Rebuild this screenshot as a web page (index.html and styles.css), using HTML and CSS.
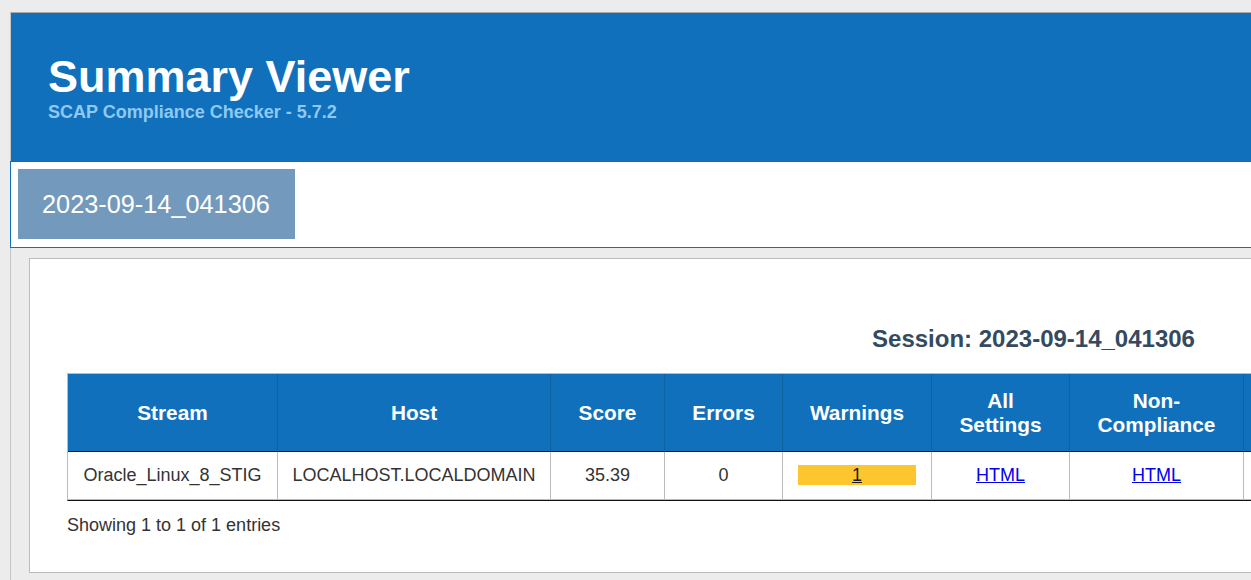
FILE: index.html
```html
<!DOCTYPE html>
<html lang="en">
<head>
<meta charset="utf-8">
<title>Summary Viewer</title>
<link rel="stylesheet" href="styles.css">
</head>
<body>
<div class="page">
  <header class="banner">
    <h1 class="title">Summary Viewer</h1>
    <div class="subtitle">SCAP Compliance Checker - 5.7.2</div>
  </header>
  <nav class="tabs">
    <div class="tab">2023-09-14_041306</div>
  </nav>
  <main class="content">
    <section class="card">
      <h2 class="session">Session: 2023-09-14_041306</h2>
      <table class="results">
        <thead>
          <tr>
            <th class="c-stream">Stream</th>
            <th class="c-host">Host</th>
            <th class="c-score">Score</th>
            <th class="c-errors">Errors</th>
            <th class="c-warn">Warnings</th>
            <th class="c-all">All Settings</th>
            <th class="c-non">Non-Compliance</th>
            <th class="c-extra">XCCDF Results</th>
            <th class="c-extra">ARF Results</th>
            <th class="c-extra">OVAL Results</th>
            <th class="c-extra">Log</th>
          </tr>
        </thead>
        <tbody>
          <tr>
            <td>Oracle_Linux_8_STIG</td>
            <td>LOCALHOST.LOCALDOMAIN</td>
            <td>35.39</td>
            <td>0</td>
            <td><span class="warn"><a class="warn-link" href="#">1</a></span></td>
            <td><a href="#">HTML</a></td>
            <td><a href="#">HTML</a></td>
            <td><a href="#">XML</a></td>
            <td><a href="#">XML</a></td>
            <td><a href="#">XML</a></td>
            <td><a href="#">TXT</a></td>
          </tr>
        </tbody>
      </table>
      <div class="info">Showing 1 to 1 of 1 entries</div>
    </section>
  </main>
</div>
</body>
</html>
```

FILE: styles.css
```css
html, body {
  margin: 0;
  padding: 0;
  background: #ececec;
  overflow: hidden;
  font-family: "Liberation Sans", Arial, sans-serif;
}

.page {
  width: max-content;
  margin: 12px 0 0 10px;
  border-top: 1px solid #aaaaaa;
  border-left: 1px solid #c6c6c6;
  min-height: 700px;
}

.banner {
  background: #1170bb;
  padding: 41px 37px 40px;
}

.title {
  margin: 0;
  color: #ffffff;
  font-size: 45px;
  line-height: 45px;
  font-weight: bold;
}

.subtitle {
  margin-top: 4px;
  color: #8ec9f5;
  font-size: 18px;
  line-height: 18px;
  font-weight: bold;
}

.tabs {
  margin-left: -1px;
  background: #ffffff;
  border: 1px solid #1170bb;
  padding: 7px 7px 8px;
}

.tab {
  display: inline-block;
  vertical-align: top;
  background: #739abd;
  color: #ffffff;
  font-size: 25.3px;
  height: 70px;
  line-height: 70px;
  padding: 0 24px;
  width: 229px;
  text-align: left;
  white-space: nowrap;
}

.content {
  padding: 10px 18px 0;
}

.card {
  width: max-content;
  background: #ffffff;
  border: 1px solid #bbbbbb;
  padding: 66px 37px 36px;
}

.session {
  margin: 0 0 20px;
  text-align: center;
  color: #344a5f;
  font-size: 24px;
  line-height: 28px;
  font-weight: bold;
}

.results {
  width: 1933px;
  table-layout: fixed;
  border-collapse: separate;
  border-spacing: 0;
  border-top: 1px solid #bbbbbb;
  border-left: 1px solid #bbbbbb;
  border-bottom: 1px solid #111111;
}

.results th,
.results td {
  box-sizing: border-box;
  text-align: center;
}

.results th {
  background: #1170bb;
  color: #ffffff;
  font-size: 20.8px;
  line-height: 24px;
  font-weight: bold;
  padding: 15px 18px 14px;
  height: 78px;
  border-right: 1px solid #0f63a0;
  border-bottom: 1px solid #111111;
  vertical-align: middle;
}

.results td {
  color: #333333;
  font-size: 18px;
  line-height: 20px;
  padding: 13px 14px 14px;
  border-right: 1px solid #bbbbbb;
  border-bottom: 1px solid #bbbbbb;
  vertical-align: middle;
}

.c-stream { width: 210px; }
.c-host { width: 273px; }
.c-score { width: 114px; }
.c-errors { width: 118px; }
.c-warn { width: 149px; }
.c-all { width: 138px; }
.c-non { width: 174px; }
.c-extra { width: 189px; }

.results td:nth-child(5) {
  padding-left: 15px;
  padding-right: 15px;
}

.results a {
  color: #0000ee;
  text-decoration: underline;
}

.warn {
  display: block;
  background: #fdc62e;
  line-height: 20px;
}

.results a.warn-link {
  color: #1a1a1a;
}

.info {
  margin-top: 14px;
  color: #333333;
  font-size: 18px;
  line-height: 21px;
}
```
